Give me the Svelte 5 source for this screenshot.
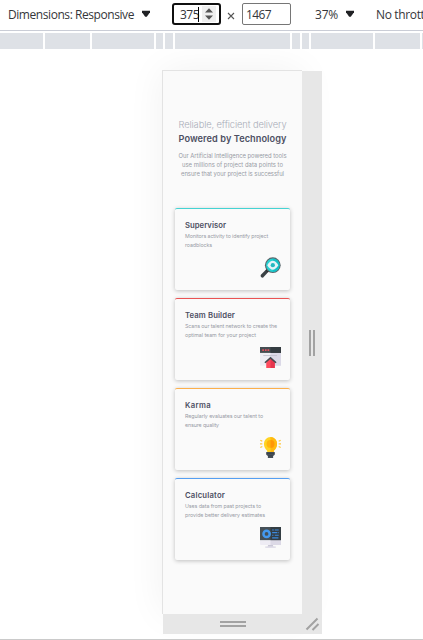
<script>
  const segments = [43, 45, 62, 7, 8, 115, 8, 7, 62, 45, 20];
  const cards = [
    { title: 'Supervisor', width: 41, color: '#45d3d3', icon: 'lens', lines: [['Monitors activity to identify project', 83], ['roadblocks', 27]] },
    { title: 'Team Builder', width: 50, color: '#ea5353', icon: 'house', lines: [['Scans our talent network to create the', 92], ['optimal team for your project', 71]] },
    { title: 'Karma', width: 26, color: '#fcaf4a', icon: 'bulb', lines: [['Regularly evaluates our talent to', 78], ['ensure quality', 34]] },
    { title: 'Calculator', width: 40, color: '#549ef2', icon: 'screen', lines: [['Uses data from past projects to', 76], ['provide better delivery estimates', 80]] }
  ];
  const intro = [['Our Artificial Intelligence powered tools', 108], ['use millions of project data points to', 101], ['ensure that your project is successful', 103]];

  // Tracks a line of text so that it spans the given width.
  function fit(node, width) {
    const natural = node.getBoundingClientRect().width;
    const gap = (width - natural) / node.textContent.length;
    node.style.letterSpacing = `${gap}px`;
  }
</script>

<div class="app">
  <header>
    <span class="label"><span use:fit={126}>Dimensions: Responsive</span></span>
    <svg class="arrow" width="10" height="8" viewBox="0 0 10 8"><path d="M1 .7h8v1.5L5.8 6.8H4.2L1 2.2z" fill="#202124" /></svg>
    <div class="field focused">
      <span use:fit={19}>375</span><i class="caret"></i>
      <div class="spin"><svg width="12" height="14" viewBox="0 0 12 14"><path d="M2 5.5 6 1.2l4 4.3zM2 8.5h8l-4 4.3z" fill="#555" /></svg></div>
    </div>
    <svg class="times" width="8" height="8" viewBox="0 0 8 8"><path d="m1 1 6 6M7 1 1 7" stroke="#555" stroke-width="1.1" /></svg>
    <div class="field plain"><span use:fit={25}>1467</span></div>
    <span class="zoom"><span use:fit={23}>37%</span></span>
    <svg class="arrow" width="10" height="8" viewBox="0 0 10 8"><path d="M1 .7h8v1.5L5.8 6.8H4.2L1 2.2z" fill="#202124" /></svg>
    <span class="throttle"><span use:fit={67}>No throttling</span></span>
  </header>
  <div class="ruler">
    {#each segments as w}<i style="width:{w}px"></i>{/each}
  </div>
  <main>
    <div class="device">
      <div class="page">
        <div class="light"><span use:fit={108}>Reliable, efficient delivery</span></div>
        <div class="strong"><span use:fit={108}>Powered by Technology</span></div>
        <div class="intro">
          {#each intro as [text, w]}<div><span use:fit={w}>{text}</span></div>{/each}
        </div>
        <div class="cards">
          {#each cards as card}
            <article style="border-color:{card.color}">
              <h2><span use:fit={card.width}>{card.title}</span></h2>
              {#each card.lines as [text, w]}<div class="line"><span use:fit={w}>{text}</span></div>{/each}
              <svg class="icon" width="21" height="21" viewBox="0 0 64 64">
                {#if card.icon === 'lens'}
                  <path d="M2 55 21 36l7 7L9 63q-8 0-7-8z" fill="#3b4145" />
                  <path d="m17 40 7-7 7 7-7 7z" fill="#24292c" />
                  <circle cx="39" cy="25" r="24" fill="#58666b" />
                  <circle cx="39" cy="25" r="20.5" fill="#27d0d1" />
                  <path d="M39 4.500a20.500 20.500 0 0 1 0 41z" fill="#14bfc5" />
                  <path d="M22 25q17-27 34 0-17 27-34 0z" fill="#e5f4f8" />
                  <circle cx="39" cy="25" r="6.500" fill="#25b9c0" />
                {:else if card.icon === 'house'}
                  <path d="M0 17h64v40H0z" fill="#eeedf5" />
                  <path d="M32 17h32v40H32z" fill="#dbd9e7" />
                  <path d="M0 0h64v18H0z" fill="#454d52" />
                  <path d="M32 0h32v18H32z" fill="#343c41" />
                  <path d="M7 7h5v5H7zm8 0h5v5h-5zm8 0h5v5h-5z" fill="#e54d5d" />
                  <path d="M10 26h42" stroke="#c5c4d2" stroke-width="3" />
                  <path d="M19 64V45l13-11 13 11v19z" fill="#ff4a5e" />
                  <path d="M32 34 45 45v19H32z" fill="#e5364e" />
                  <path d="m15 48 17-15 17 15" fill="none" stroke="#464b52" stroke-width="5" />
                {:else if card.icon === 'bulb'}
                  <path d="M22 48v-6Q12 33 12 20a20 20 0 0 1 40 0q0 13-10 22v6z" fill="#ffd321" />
                  <path d="M32 0a20 20 0 0 1 20 20q0 13-10 22v6H32z" fill="#ffb910" />
                  <circle cx="32" cy="21" r="12" fill="#ffb50b" />
                  <path d="M32 9a12 12 0 0 1 0 24z" fill="#ff9707" />
                  <path d="M19 46h26v8l-5 4v6H24v-6l-5-4z" fill="#464f57" />
                  <path d="M20 50h24M25 57h14" stroke="#343d44" stroke-width="2" />
                  <path d="m1 10 6 3M0 21h7M1 32l6-3M63 10l-6 3m7 8h-7m6 11-6-3" stroke="#ffc83c" stroke-width="4" />
                {:else}
                  <path d="M26 50h12l3 11H23z" fill="#c9c7d6" />
                  <path d="M16 59h32v5H16z" fill="#e0dee9" />
                  <path d="M0 40h64v12q0 3-3 3H3q-3 0-3-3z" fill="#eeecf4" />
                  <path d="M32 40h32v15H32z" fill="#dcd9e6" />
                  <path d="M0 0h64v40H0z" fill="#465057" />
                  <path d="M32 0h32v40H32z" fill="#333d43" />
                  <circle cx="20" cy="21" r="9.500" fill="none" stroke="#4399f0" stroke-width="7.500" />
                  <path d="M37 9h5m3 0h12M37 17h16m3 0h2M37 25h4m4 0h12M37 33h19" stroke="#3c8ade" stroke-width="3.500" />
                {/if}
              </svg>
            </article>
          {/each}
        </div>
      </div>
      <div class="right"><i></i><i></i></div>
      <div class="bottom"><i></i><i></i></div>
      <div class="corner"><svg width="20" height="20" viewBox="0 0 20 20"><path d="m4.500 15.500 11-11M10.500 16l6-6" stroke="#a2a2a2" stroke-width="2" /></svg></div>
    </div>
  </main>
</div>

<style>
  :global(body) { margin: 0; overflow: hidden; background: #fff; }
  .app { width: 423px; height: 640px; box-sizing: border-box; overflow: hidden; border-bottom: 1px solid #cacaca; background: #fff; font-family: Inter, sans-serif; white-space: nowrap; }
  i { display: block; flex: none; }
  svg { display: block; flex: none; }
  header { display: flex; border-bottom: 1px solid #cacdd6; box-sizing: border-box; height: 31px; font: 12px/16px "Open Sans", sans-serif; color: #35363a; overflow: hidden; }
  header > * { flex: none; }
  .label { width: 133px; padding: 7px 0 0 8px; }
  .arrow { margin-top: 10px; }
  .field { box-sizing: border-box; height: 22px; margin-top: 3px; display: flex; align-items: center; }
  .field > span { padding-top: 1px; }
  .focused { width: 49px; margin-left: 21px; border: 2px solid #101010; border-radius: 3px; padding-left: 6px; }
  .caret { width: 1px; height: 15px; background: #000; margin-left: -1px; }
  .spin { width: 14px; height: 16px; margin-left: 3px; background: #efefef; display: flex; align-items: center; justify-content: center; }
  .times { margin: 12px 7px 0 6px; }
  .plain { width: 49px; border: 1px solid #767676; border-radius: 2px; padding-left: 3px; }
  .zoom { width: 30px; padding: 7px 0 0 24px; }
  .throttle { padding: 7px 0 0 21px; }
  .ruler { display: flex; gap: 2px; height: 16px; margin-top: 2px; overflow: hidden; }
  .ruler i { height: 16px; background: #dee1e6; }
  main { height: 590px; padding: 21px 0 0 162px; box-sizing: border-box; overflow: hidden; }
  .device { width: 160px; display: grid; grid-template-columns: 140px 20px; grid-template-rows: 544px 20px; }
  .page { box-sizing: border-box; border: 1px solid #e3e3e3; border-width: 1px 0 0 1px; background: #fafafa; box-shadow: 0 0 36px rgba(0, 0, 0, .06); text-align: center; padding-top: 47px; }
  .right, .bottom { background: #e7e7e7; display: flex; align-items: center; justify-content: center; position: relative; }
  .right { gap: 2px; margin-top: 1px; }
  .right i { width: 2px; height: 26px; background: #a2a2a2; }
  .bottom { flex-direction: column; gap: 2px; margin-left: 1px; }
  .bottom i { width: 26px; height: 2px; background: #a2a2a2; }
  .corner { background: #e7e7e7; position: relative; }
  .light { font-size: 9.3px; line-height: 13px; height: 13px; font-weight: 300; color: #a9adb8; }
  .strong { font-size: 9.2px; line-height: 15px; height: 15px; font-weight: 600; color: #4d4f62; }
  .intro { padding-top: 5px; font-size: 5.9px; line-height: 9px; color: #989aa5; }
  .intro > div { height: 9px; }
  .cards { display: flex; flex-direction: column; gap: 8px; padding: 30px 12px 0; text-align: left; }
  article { position: relative; box-sizing: border-box; height: 82px; width: 115px; padding: 12px 10px 0; border-top: 1px solid; border-radius: 2px; background: #fafafa; box-shadow: 0 1px 4px rgba(0, 0, 0, .24); }
  h2 { margin: 0 0 2px; font-size: 7.7px; line-height: 10px; height: 9px; font-weight: 600; color: #4d4f62; }
  .line { font-size: 5.3px; line-height: 8.5px; height: 8.5px; color: #989aa5; }
  .icon { position: absolute; right: 9px; bottom: 12px; }
</style>
